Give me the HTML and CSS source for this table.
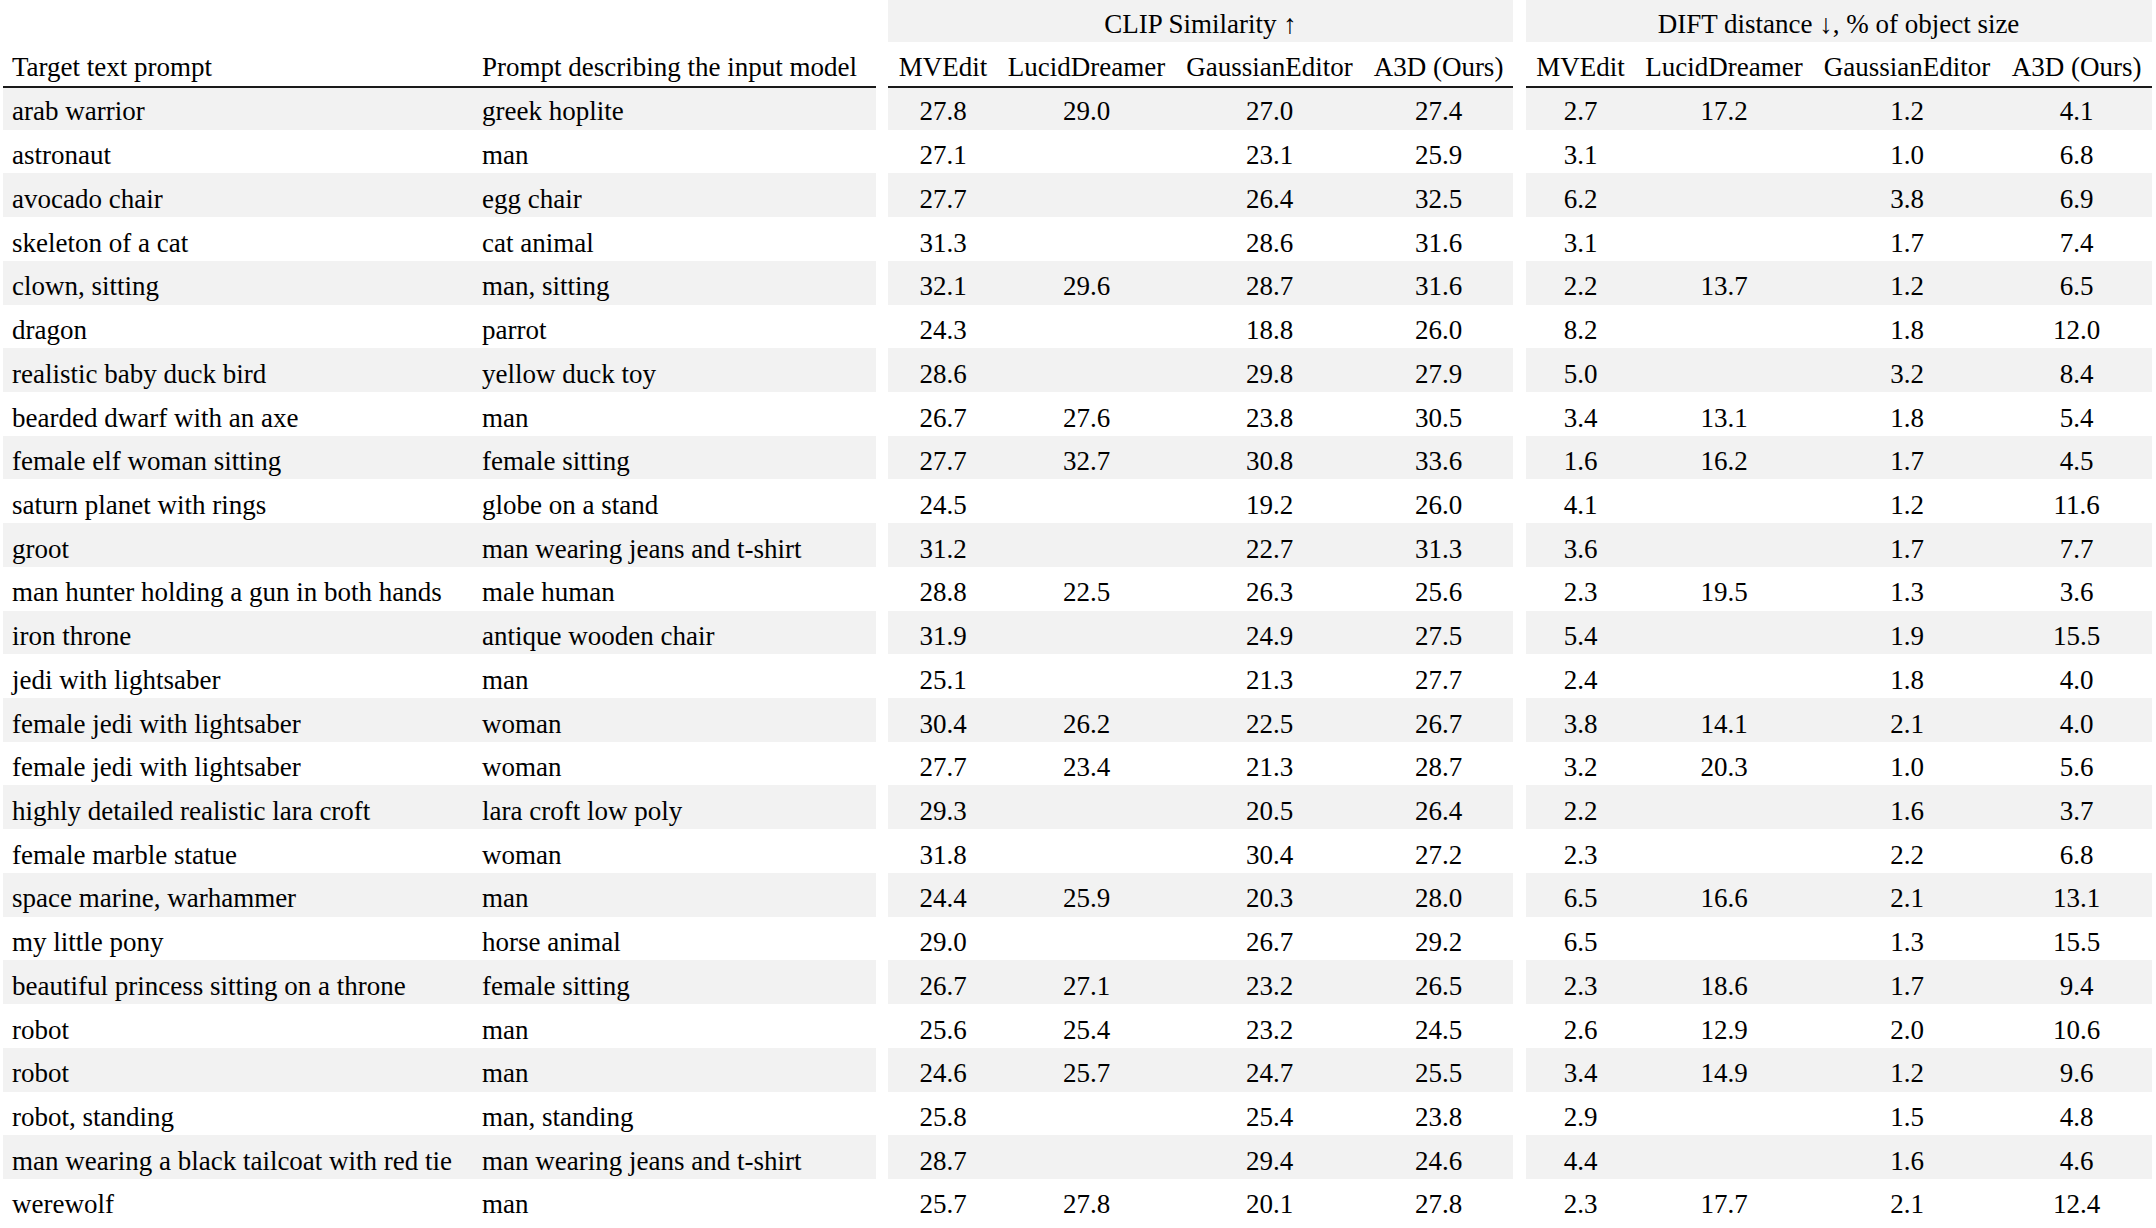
FILE: index.html
```html
<!DOCTYPE html>
<html lang="en">
<head>
<meta charset="utf-8">
<title>Text-guided 3D editing comparison</title>
<link rel="stylesheet" href="styles.css">
</head>
<body>
<table class="results">
  <colgroup>
    <col class="w-target"><col class="w-input">
    <col class="w-gap">
    <col class="w-mv"><col class="w-ld"><col class="w-ge"><col class="w-a3d">
    <col class="w-gap2">
    <col class="w-mv2"><col class="w-ld"><col class="w-ge"><col class="w-a3d2">
  </colgroup>
  <thead>
    <tr class="group-row">
      <th colspan="2" class="blank"></th>
      <th class="gap"></th>
      <th colspan="4" class="group">CLIP Similarity ↑</th>
      <th class="gap"></th>
      <th colspan="4" class="group">DIFT distance ↓, % of object size</th>
    </tr>
    <tr class="col-row">
      <th class="text">Target text prompt</th>
      <th class="text">Prompt describing the input model</th>
      <th class="gap"></th>
      <th class="num">MVEdit</th>
      <th class="num">LucidDreamer</th>
      <th class="num">GaussianEditor</th>
      <th class="num">A3D (Ours)</th>
      <th class="gap"></th>
      <th class="num">MVEdit</th>
      <th class="num">LucidDreamer</th>
      <th class="num">GaussianEditor</th>
      <th class="num">A3D (Ours)</th>
    </tr>
  </thead>
  <tbody>
    <tr><td class="text">arab warrior</td><td class="text">greek hoplite</td><td class="gap"></td><td class="num">27.8</td><td class="num">29.0</td><td class="num">27.0</td><td class="num">27.4</td><td class="gap"></td><td class="num">2.7</td><td class="num">17.2</td><td class="num">1.2</td><td class="num">4.1</td></tr>
    <tr><td class="text">astronaut</td><td class="text">man</td><td class="gap"></td><td class="num">27.1</td><td class="num"></td><td class="num">23.1</td><td class="num">25.9</td><td class="gap"></td><td class="num">3.1</td><td class="num"></td><td class="num">1.0</td><td class="num">6.8</td></tr>
    <tr><td class="text">avocado chair</td><td class="text">egg chair</td><td class="gap"></td><td class="num">27.7</td><td class="num"></td><td class="num">26.4</td><td class="num">32.5</td><td class="gap"></td><td class="num">6.2</td><td class="num"></td><td class="num">3.8</td><td class="num">6.9</td></tr>
    <tr><td class="text">skeleton of a cat</td><td class="text">cat animal</td><td class="gap"></td><td class="num">31.3</td><td class="num"></td><td class="num">28.6</td><td class="num">31.6</td><td class="gap"></td><td class="num">3.1</td><td class="num"></td><td class="num">1.7</td><td class="num">7.4</td></tr>
    <tr><td class="text">clown, sitting</td><td class="text">man, sitting</td><td class="gap"></td><td class="num">32.1</td><td class="num">29.6</td><td class="num">28.7</td><td class="num">31.6</td><td class="gap"></td><td class="num">2.2</td><td class="num">13.7</td><td class="num">1.2</td><td class="num">6.5</td></tr>
    <tr><td class="text">dragon</td><td class="text">parrot</td><td class="gap"></td><td class="num">24.3</td><td class="num"></td><td class="num">18.8</td><td class="num">26.0</td><td class="gap"></td><td class="num">8.2</td><td class="num"></td><td class="num">1.8</td><td class="num">12.0</td></tr>
    <tr><td class="text">realistic baby duck bird</td><td class="text">yellow duck toy</td><td class="gap"></td><td class="num">28.6</td><td class="num"></td><td class="num">29.8</td><td class="num">27.9</td><td class="gap"></td><td class="num">5.0</td><td class="num"></td><td class="num">3.2</td><td class="num">8.4</td></tr>
    <tr><td class="text">bearded dwarf with an axe</td><td class="text">man</td><td class="gap"></td><td class="num">26.7</td><td class="num">27.6</td><td class="num">23.8</td><td class="num">30.5</td><td class="gap"></td><td class="num">3.4</td><td class="num">13.1</td><td class="num">1.8</td><td class="num">5.4</td></tr>
    <tr><td class="text">female elf woman sitting</td><td class="text">female sitting</td><td class="gap"></td><td class="num">27.7</td><td class="num">32.7</td><td class="num">30.8</td><td class="num">33.6</td><td class="gap"></td><td class="num">1.6</td><td class="num">16.2</td><td class="num">1.7</td><td class="num">4.5</td></tr>
    <tr><td class="text">saturn planet with rings</td><td class="text">globe on a stand</td><td class="gap"></td><td class="num">24.5</td><td class="num"></td><td class="num">19.2</td><td class="num">26.0</td><td class="gap"></td><td class="num">4.1</td><td class="num"></td><td class="num">1.2</td><td class="num">11.6</td></tr>
    <tr><td class="text">groot</td><td class="text">man wearing jeans and t-shirt</td><td class="gap"></td><td class="num">31.2</td><td class="num"></td><td class="num">22.7</td><td class="num">31.3</td><td class="gap"></td><td class="num">3.6</td><td class="num"></td><td class="num">1.7</td><td class="num">7.7</td></tr>
    <tr><td class="text">man hunter holding a gun in both hands</td><td class="text">male human</td><td class="gap"></td><td class="num">28.8</td><td class="num">22.5</td><td class="num">26.3</td><td class="num">25.6</td><td class="gap"></td><td class="num">2.3</td><td class="num">19.5</td><td class="num">1.3</td><td class="num">3.6</td></tr>
    <tr><td class="text">iron throne</td><td class="text">antique wooden chair</td><td class="gap"></td><td class="num">31.9</td><td class="num"></td><td class="num">24.9</td><td class="num">27.5</td><td class="gap"></td><td class="num">5.4</td><td class="num"></td><td class="num">1.9</td><td class="num">15.5</td></tr>
    <tr><td class="text">jedi with lightsaber</td><td class="text">man</td><td class="gap"></td><td class="num">25.1</td><td class="num"></td><td class="num">21.3</td><td class="num">27.7</td><td class="gap"></td><td class="num">2.4</td><td class="num"></td><td class="num">1.8</td><td class="num">4.0</td></tr>
    <tr><td class="text">female jedi with lightsaber</td><td class="text">woman</td><td class="gap"></td><td class="num">30.4</td><td class="num">26.2</td><td class="num">22.5</td><td class="num">26.7</td><td class="gap"></td><td class="num">3.8</td><td class="num">14.1</td><td class="num">2.1</td><td class="num">4.0</td></tr>
    <tr><td class="text">female jedi with lightsaber</td><td class="text">woman</td><td class="gap"></td><td class="num">27.7</td><td class="num">23.4</td><td class="num">21.3</td><td class="num">28.7</td><td class="gap"></td><td class="num">3.2</td><td class="num">20.3</td><td class="num">1.0</td><td class="num">5.6</td></tr>
    <tr><td class="text">highly detailed realistic lara croft</td><td class="text">lara croft low poly</td><td class="gap"></td><td class="num">29.3</td><td class="num"></td><td class="num">20.5</td><td class="num">26.4</td><td class="gap"></td><td class="num">2.2</td><td class="num"></td><td class="num">1.6</td><td class="num">3.7</td></tr>
    <tr><td class="text">female marble statue</td><td class="text">woman</td><td class="gap"></td><td class="num">31.8</td><td class="num"></td><td class="num">30.4</td><td class="num">27.2</td><td class="gap"></td><td class="num">2.3</td><td class="num"></td><td class="num">2.2</td><td class="num">6.8</td></tr>
    <tr><td class="text">space marine, warhammer</td><td class="text">man</td><td class="gap"></td><td class="num">24.4</td><td class="num">25.9</td><td class="num">20.3</td><td class="num">28.0</td><td class="gap"></td><td class="num">6.5</td><td class="num">16.6</td><td class="num">2.1</td><td class="num">13.1</td></tr>
    <tr><td class="text">my little pony</td><td class="text">horse animal</td><td class="gap"></td><td class="num">29.0</td><td class="num"></td><td class="num">26.7</td><td class="num">29.2</td><td class="gap"></td><td class="num">6.5</td><td class="num"></td><td class="num">1.3</td><td class="num">15.5</td></tr>
    <tr><td class="text">beautiful princess sitting on a throne</td><td class="text">female sitting</td><td class="gap"></td><td class="num">26.7</td><td class="num">27.1</td><td class="num">23.2</td><td class="num">26.5</td><td class="gap"></td><td class="num">2.3</td><td class="num">18.6</td><td class="num">1.7</td><td class="num">9.4</td></tr>
    <tr><td class="text">robot</td><td class="text">man</td><td class="gap"></td><td class="num">25.6</td><td class="num">25.4</td><td class="num">23.2</td><td class="num">24.5</td><td class="gap"></td><td class="num">2.6</td><td class="num">12.9</td><td class="num">2.0</td><td class="num">10.6</td></tr>
    <tr><td class="text">robot</td><td class="text">man</td><td class="gap"></td><td class="num">24.6</td><td class="num">25.7</td><td class="num">24.7</td><td class="num">25.5</td><td class="gap"></td><td class="num">3.4</td><td class="num">14.9</td><td class="num">1.2</td><td class="num">9.6</td></tr>
    <tr><td class="text">robot, standing</td><td class="text">man, standing</td><td class="gap"></td><td class="num">25.8</td><td class="num"></td><td class="num">25.4</td><td class="num">23.8</td><td class="gap"></td><td class="num">2.9</td><td class="num"></td><td class="num">1.5</td><td class="num">4.8</td></tr>
    <tr><td class="text">man wearing a black tailcoat with red tie</td><td class="text">man wearing jeans and t-shirt</td><td class="gap"></td><td class="num">28.7</td><td class="num"></td><td class="num">29.4</td><td class="num">24.6</td><td class="gap"></td><td class="num">4.4</td><td class="num"></td><td class="num">1.6</td><td class="num">4.6</td></tr>
    <tr><td class="text">werewolf</td><td class="text">man</td><td class="gap"></td><td class="num">25.7</td><td class="num">27.8</td><td class="num">20.1</td><td class="num">27.8</td><td class="gap"></td><td class="num">2.3</td><td class="num">17.7</td><td class="num">2.1</td><td class="num">12.4</td></tr>
  </tbody>
</table>
</body>
</html>
```

FILE: styles.css
```css
html, body {
  margin: 0;
  padding: 0;
  background: #ffffff;
}

body {
  font-family: "Liberation Serif", "Times New Roman", "DejaVu Serif", serif;
  font-size: 27px;
  color: #000000;
}

.results {
  table-layout: fixed;
  border-collapse: separate;
  border-spacing: 0;
  width: 2148.5px;
  margin-left: 3px;
}

.w-target { width: 470px; }
.w-input { width: 403px; }
.w-gap { width: 12px; }
.w-gap2 { width: 12.5px; }
.w-mv { width: 110px; }
.w-mv2 { width: 110px; }
.w-ld { width: 177px; }
.w-ge { width: 189px; }
.w-a3d { width: 149px; }
.w-a3d2 { width: 150px; }

.results th,
.results td {
  font-weight: normal;
  line-height: 31px;
  white-space: nowrap;
  overflow: visible;
  vertical-align: top;
}

.results .text {
  text-align: left;
  padding-left: 9px;
  padding-right: 9px;
}

.results .num {
  text-align: center;
  padding-left: 0;
  padding-right: 0;
}

.results .gap {
  padding: 0;
  background: transparent;
}

/* top group header row */
.group-row th {
  padding-top: 8.9px;
  padding-bottom: 2.1px;
}

.group-row .group {
  text-align: center;
  background: #f2f2f2;
}

/* column header row */
.col-row th {
  padding-top: 9.9px;
  padding-bottom: 3.1px;
  border-bottom: 2px solid #1a1a1a;
}

.col-row th.gap {
  border-bottom: none;
}

/* body rows */
.results tbody td {
  padding-top: 10.5px;
  padding-bottom: 2.22px;
}

.results tbody tr:first-child td {
  padding-top: 8.5px;
}

.results tbody tr:nth-child(odd) td {
  background: #f2f2f2;
}

.results tbody tr:nth-child(odd) td.gap {
  background: transparent;
}
```
